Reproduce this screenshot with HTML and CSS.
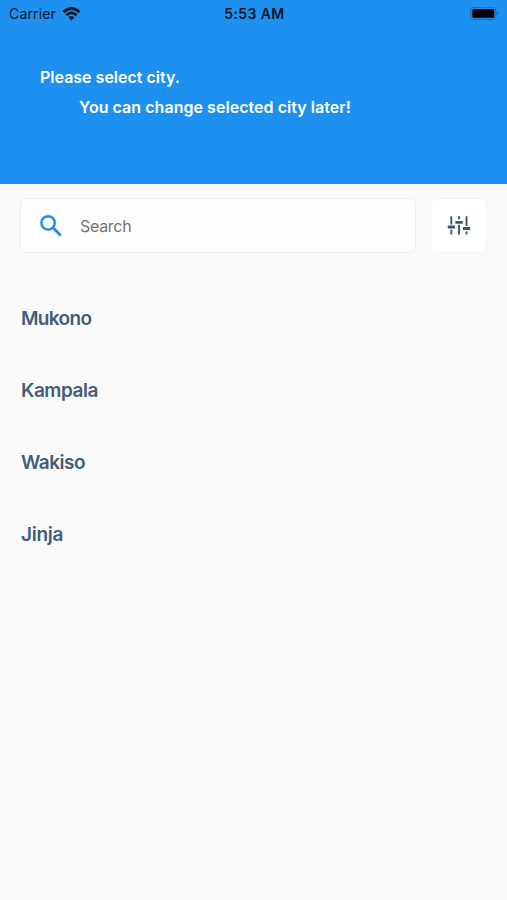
FILE: index.html
```html
<!DOCTYPE html>
<html lang="en">
<head>
<meta charset="utf-8">
<title>Select city</title>
<link rel="stylesheet" href="styles.css">
</head>
<body>
<header class="header">
  <div class="status">
    <div class="carrier">
      <span>Carrier</span>
      <svg width="19" height="14" viewBox="0 0 18 14" fill="none" stroke="#05192b" stroke-width="2.8"><path d="M1 5.1Q9-2.1 17 5.1M3.9 8.2Q9 3.5 14.1 8.2"/><path d="M6.1 10.4Q9 7.8 11.9 10.4L9 13.4Z" fill="#05192b" stroke="none"/></svg>
    </div>
    <span class="time">5:53 AM</span>
    <svg class="battery" width="30" height="14" viewBox="0 0 30 14"><rect x=".7" y=".4" width="25.2" height="12" rx="3.2" fill="none" stroke="#126bb4"/><rect x="2.3" y="2" width="22" height="8.8" rx="1.6" fill="#000"/><path d="M27.2 4.4Q30.2 6.4 27.2 8.4Z" fill="#126bb4"/></svg>
  </div>
  <p class="title">Please select city.</p>
  <p class="subtitle">You can change selected city later!</p>
</header>
<main class="content">
  <div class="tools">
    <label class="search">
      <svg width="22" height="22" viewBox="0 0 22 22" fill="none" stroke="#1c8fee" stroke-width="2.4"><circle cx="8.1" cy="7.9" r="6.7"/><path d="M13 12.8L20.7 20.5" stroke-width="2.8"/></svg>
      <span>Search</span>
    </label>
    <div class="filter">
      <svg width="24" height="20" viewBox="0 0 24 20" fill="none" stroke="#3c5572"><path stroke-width="1.9" d="M4.3.3V8.5M4.3 13.7V18.5M12 .3V3.3M12 8.7V18.5M19.5.3V9.9M19.5 15.5V18.5"/><path stroke-width="2.8" d="M.8 11H8.1M8.3 6.3H15.8M16 12.5H23.2"/></svg>
    </div>
  </div>
  <ul class="cities">
    <li class="mukono">Mukono</li>
    <li class="kampala">Kampala</li>
    <li class="wakiso">Wakiso</li>
    <li class="jinja">Jinja</li>
  </ul>
</main>
</body>
</html>
```
FILE: styles.css
```css
* { box-sizing: border-box; }
body {
  margin: 0;
  min-height: 900px;
  background: #fafafa;
  font-family: Inter, "Liberation Sans", sans-serif;
}
p, ul { margin: 0; padding: 0; }
svg { display: block; flex: none; }
.header { height: 184px; background: #1e90f0; color: #fff; }
.status {
  display: grid;
  grid-template-columns: 1fr auto 1fr;
  align-items: center;
  height: 27px;
  padding: 0 7px 0 9px;
  color: #05192b;
  font-size: 14px;
}
.carrier { display: flex; align-items: center; gap: 6px; letter-spacing: .15px; }
.time { font-weight: 600; letter-spacing: .4px; }
.battery { justify-self: end; }
.title, .subtitle {
  font-size: 16px;
  line-height: 30px;
  font-weight: 600;
  white-space: nowrap;
}
.title { padding: 35px 0 0 40px; letter-spacing: 0; }
.subtitle { padding-left: 79px; letter-spacing: .04px; }
.content { padding: 14px 20px 0; }
.tools { display: flex; gap: 14px; }
.search {
  display: flex;
  flex: 1;
  align-items: center;
  gap: 18px;
  height: 55px;
  padding-left: 19px;
  border: 1px solid #f0f0f0;
  border-radius: 6px;
  background: #fdfdfd;
  color: #737373;
  font-size: 16px;
  letter-spacing: -.3px;
}
.filter {
  display: flex;
  align-items: center;
  justify-content: center;
  width: 57px;
  height: 55px;
  border: 1px solid #f4f4f4;
  border-radius: 6px;
  background: #fff;
}
.cities { padding-top: 30px; list-style: none; }
.cities li {
  height: 72px;
  padding-left: 1px;
  line-height: 72px;
  color: #435c78;
  font-size: 19px;
  font-weight: 600;
}
.mukono { letter-spacing: -.65px; }
.kampala { letter-spacing: -.45px; }
.wakiso { letter-spacing: -.5px; }
.jinja { letter-spacing: -.3px; }
```
